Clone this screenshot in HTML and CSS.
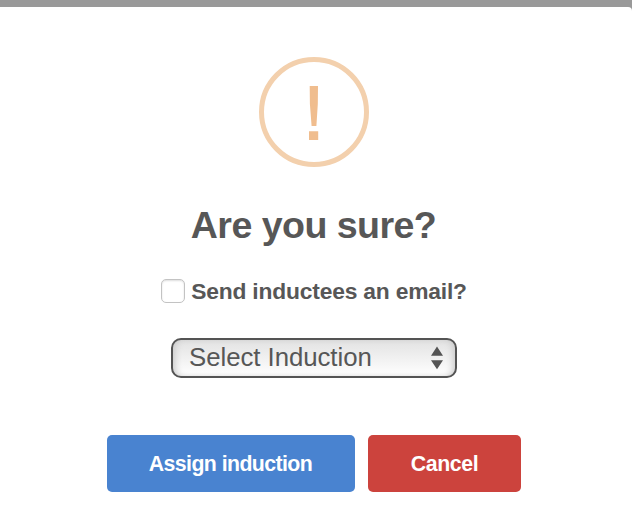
FILE: index.html
```html
<!DOCTYPE html>
<html lang="en">
<head>
<meta charset="utf-8">
<title>Assign induction</title>
<link rel="stylesheet" href="styles.css">
</head>
<body>
<main class="dialog">
  <svg class="warning" width="110" height="110" viewBox="0 0 110 110" aria-hidden="true">
    <circle cx="55" cy="55" r="52.5" fill="none" stroke="#f3d0ad" stroke-width="5"/>
    <path d="M50.7 29h8.3l-.2 18-1.4 22h-4.8l-1.7-22zM50 74.2h9.2v8.8H50z" fill="#f0bd8e"/>
  </svg>
  <h1 class="title">Are you sure?</h1>
  <label class="option"><input class="checkbox" type="checkbox"><span class="option-label">Send inductees an email?</span></label>
  <div class="select">
    <span class="select-label">Select Induction</span>
    <svg width="12" height="24" viewBox="0 0 12 24" aria-hidden="true"><path d="M0 9.7 6 .5l6 9.2zM0 14.2h12L6 23.2z" fill="#545454"/></svg>
  </div>
  <div class="actions">
    <button class="button confirm">Assign induction</button>
    <button class="button cancel">Cancel</button>
  </div>
</main>
</body>
</html>
```
FILE: styles.css
```css
* { box-sizing: border-box; }
body {
  margin: 0;
  padding-top: 7px;
  height: 520px;
  overflow: hidden;
  background: #999;
  color: #575757;
  font-family: "Liberation Sans", Arial, sans-serif;
}
.dialog {
  display: flex;
  flex-direction: column;
  align-items: center;
  height: 513px;
  padding: 50px 4px 0 0;
  background: #fff;
  border-top-right-radius: 4px;
}
.warning { display: block; flex: none; }
.title {
  margin: 36px 0 0;
  padding-right: 1px;
  font-size: 37.6px;
  line-height: 44px;
  letter-spacing: -0.55px;
  white-space: nowrap;
}
.option {
  display: flex;
  align-items: center;
  gap: 6px;
  height: 26px;
  margin-top: 31px;
  font-size: 22.8px;
  font-weight: 700;
  line-height: 26px;
  letter-spacing: -0.18px;
  white-space: nowrap;
}
.checkbox {
  appearance: none;
  width: 24px;
  height: 24px;
  margin: 0;
  border: 1px solid #c3c3c3;
  border-radius: 5px;
  background: #fff;
  box-shadow: inset 0 1px 2px #ddd;
}
.select {
  display: flex;
  align-items: center;
  justify-content: space-between;
  width: 286px;
  height: 40px;
  margin-top: 34px;
  padding: 0 12px 0 16px;
  border: 2px solid #545454;
  border-radius: 10px;
  background: linear-gradient(#e2e2e2, #fff);
  box-shadow: inset 5px 0 7px -3px #c9c9c9, inset -5px 0 7px -3px #c9c9c9;
}
.select-label {
  padding-bottom: 2px;
  font-size: 25.8px;
  line-height: 34px;
  letter-spacing: -0.05px;
  white-space: nowrap;
}
.actions {
  display: flex;
  gap: 13px;
  margin-top: 57px;
}
.button {
  height: 57px;
  padding: 2px 0 0;
  border: 0;
  border-radius: 5px;
  color: #fff;
  font: 700 21.3px/25px "Liberation Sans", Arial, sans-serif;
  white-space: nowrap;
}
.confirm { width: 248px; padding-right: 1px; background: #4983d0; letter-spacing: -0.58px; }
.cancel { width: 153px; background: #cc433d; letter-spacing: -0.35px; }
```
